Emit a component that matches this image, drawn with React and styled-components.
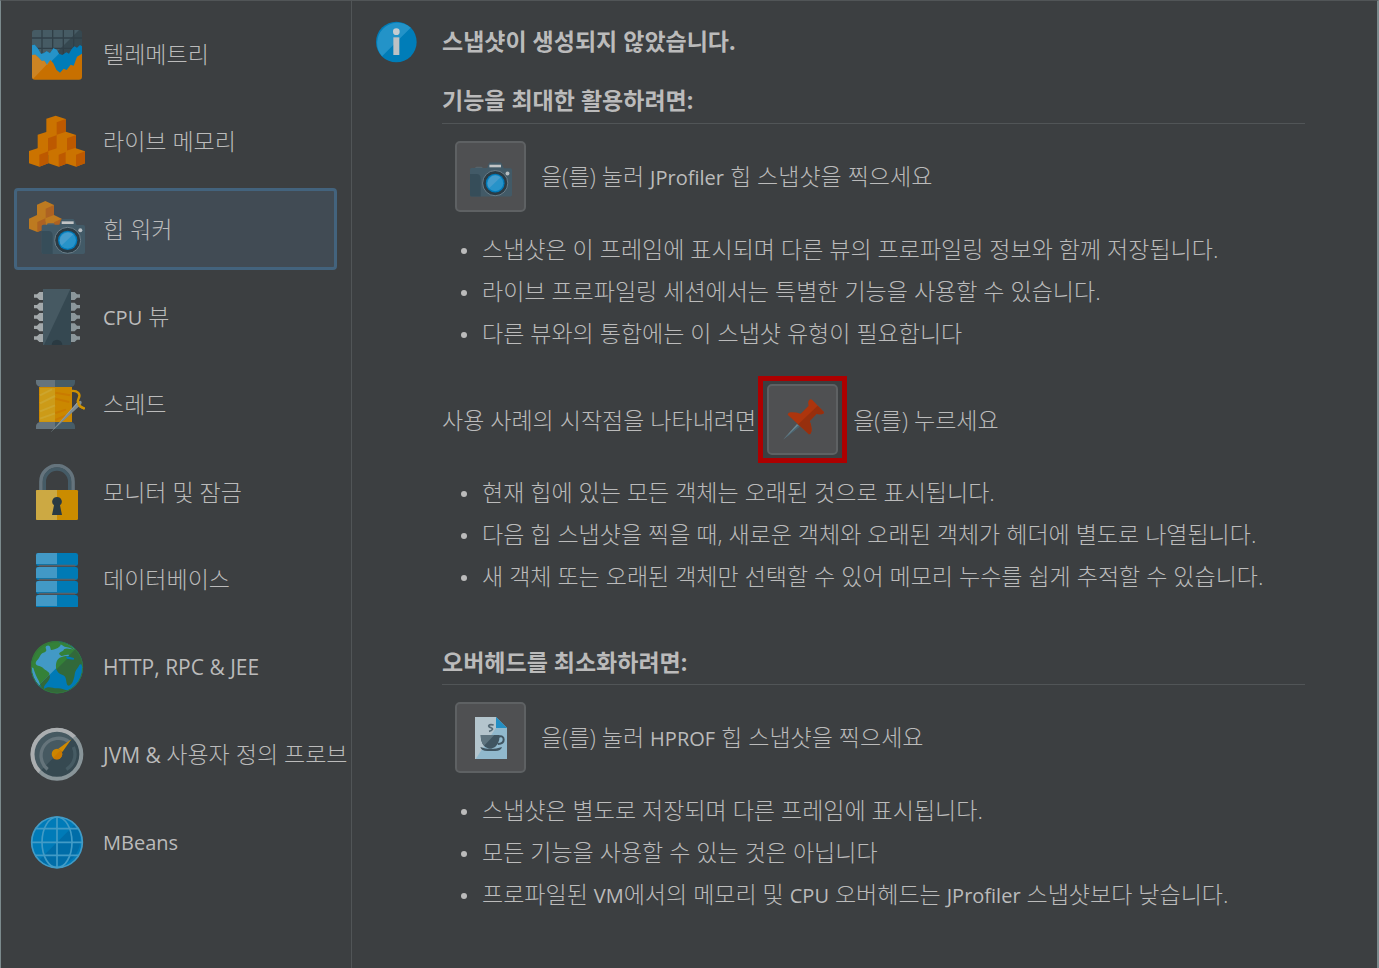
import styled, { createGlobalStyle, css } from 'styled-components';
import { useState } from 'react';

const TelemetryIcon = () => (
  <svg viewBox="87 78 168 168">
    <rect x="96" y="90" width="150" height="150" rx="9" fill="#364850" />
    <path d="M105 90h132L96 231V99q0-9 9-9z" fill="#465b64" />
    <path d="M126 90v75M158 90v75M190 90v75M221 90v75M96 114h150M96 145h150" stroke="#303f47" strokeWidth="4" />
    <path d="M96 136l8-2 10 12 9 16 8-2 9-6 10 6 10-15 10 4 7 12 10 4 12-8 8 4 8-14 8-8 8 4 9-8 6 4v90H96z" fill="#007cb8" />
    <path d="M96 136l8-2 10 12 9 16 8-2 9-6 10 6 10-15 10 4 7 12-62 62H96z" fill="#2693c8" />
    <path d="M96 165l10-1 10 9 9 10 8-1 8 13 10-15 9 10 9 19 11 9 11-12 9 4 12-16 9 3 10-27 15-9v69q0 9-9 9H105q-9 0-9-9z" fill="#c87000" />
    <path d="M96 165l10-1 10 9 9 10 8-1 8 13 10-13-52 55-3-6z" fill="#cd8423" />
  </svg>
);

const Cube = ({ x, y, depth = 46 }) => (
  <g transform={`translate(${x} ${y})`}>
    <path d={`M0 9L28 0l30 10v${depth - 10}L31 ${depth + 10} 0 ${depth}z`} fill="#cb7300" />
    <path d={`M31 20l27-10v${depth - 10}L31 ${depth + 10}z`} fill="#bd5900" />
  </g>
);

const LiveMemoryIcon = () => (
  <svg viewBox="87 339 168 168">
    <Cube x={139} y={347} depth={60} />
    <Cube x={113} y={395} depth={60} />
    <Cube x={170} y={395} depth={60} />
    <Cube x={87} y={444} />
    <Cube x={145} y={444} />
    <Cube x={197} y={444} />
  </svg>
);

// Camera body, drawn in a 130 x 106 area
const Camera = () => (
  <>
    <path d="M16 16q0-4 5-4h14q4 0 4 4v6H16z" fill="#55636b" />
    <path d="M0 21q0-5 5-5h48l5-14q1-3 5-3h30q4 0 5 3l7 15h20q5 0 5 5v77q0 5-5 5H5q-5 0-5-5z" fill="#425a67" />
    <path d="M0 35h20q13 0 13 14v55H5q-5 0-5-5z" fill="#364d59" />
    <rect x="60" y="6" width="36" height="8" fill="#c2c4c5" />
    <circle cx="78" cy="63" r="39" fill="#2b3b44" stroke="#6b7e89" strokeWidth="3" />
    <circle cx="78" cy="63" r="29" fill="#0079b8" />
    <circle cx="78" cy="63" r="25" fill="#2793c9" />
    <path d="M59 79a25 25 0 0 1 36-34z" fill="#459ccc" />
    <circle cx="116" cy="33" r="6" fill="#b6bdc1" />
  </>
);

const HeapWalkerIcon = () => (
  <svg viewBox="87 63 168 168">
    <path d="M111 74l25-11 26 12v37l-26 13-25-8z" fill="#bd7a20" />
    <path d="M137 86l25-11v37l-25 8z" fill="#ad6222" />
    <path d="M87 116l24-11 25 10v31l-24 10-25-10z" fill="#bd7a20" />
    <path d="M136 115l26-10 23 11v31l-23 10-26-11z" fill="#bd7a20" />
    <path d="M112 126l24-11v32l-24 9z" fill="#ad6222" />
    <path d="M162 127l23-11v31l-23 10z" fill="#ad6222" />
    <g transform="translate(125 118)"><Camera /></g>
  </svg>
);

const CpuIcon = () => (
  <svg viewBox="87 327 168 168">
    {[348, 380, 411, 442, 474].map((y) => (
      <g key={y}>
        <path d={`M129 ${y - 12}h-11l-7 7h-9v10h9l7 7h11z`} fill="#a3a9ab" />
        <path d={`M213 ${y - 12}h11l7 7h9v10h-9l-7 7h-11z`} fill="#8b979b" />
      </g>
    ))}
    <rect x="129" y="327" width="84" height="168" rx="3" fill="#354851" />
    <path d="M129 327h82l-79 168h-3z" fill="#465962" />
    <path d="M155 495a16 16 0 0 1 32 0z" fill="#2a3a42" />
  </svg>
);

const ThreadIcon = () => (
  <svg viewBox="87 48 168 168">
    <path d="M108 60h57v21h-44q-13-3-13-14zM108 207h57v-22h-44q-13 3-13 14z" fill="#65747d" />
    <path d="M165 60h60v7q0 12-13 14h-47zM165 207h60v-7q0-12-13-15h-47z" fill="#465c67" />
    <path d="M117 81h99v105h-99z" fill="#cb8800" />
    <path d="M120 84h45v101h-45z" fill="#cc9b18" />
    <path d="M120 106l36-18M120 130l45-22M120 154l45-18M120 176l45-16" stroke="#cda52d" strokeWidth="6" />
    <path d="M166 98l45 8M166 116l42 10M166 159l32-10M166 180l32-14" stroke="#c97b00" strokeWidth="6" />
    <path d="M213 93c20-3 30 10 23 22-6 12-5 24 17 30" fill="none" stroke="#cf9200" strokeWidth="7" />
    <path d="M152 217l79-89q7-8 12-5 5 5-2 13z" fill="#7d8c93" />
    <path d="M152 217l79-89 7-4z" fill="#a3adb1" />
    <path d="M235 126c-1 9 4 14 17 19" fill="none" stroke="#cf9200" strokeWidth="7" strokeLinecap="round" />
  </svg>
);

const LockIcon = () => (
  <svg viewBox="87 312 168 168">
    <path d="M123 392v-27a48 48 0 0 1 96 0v27" fill="none" stroke="#65747d" strokeWidth="11" />
    <path d="M133 392v-27a38 38 0 0 1 76 0v27" fill="none" stroke="#455b66" strokeWidth="10" />
    <rect x="108" y="390" width="126" height="90" rx="4" fill="#cb8c00" />
    <path d="M112 390h59v90h-59q-4 0-4-4v-82q0-4 4-4z" fill="#cca943" />
    <path d="M171 411a14 14 0 0 1 9 25l6 29h-30l6-29a14 14 0 0 1 9-25z" fill="#293a43" />
  </svg>
);

const DatabaseIcon = () => (
  <svg viewBox="87 33 168 168">
    {[39, 81, 123, 165].map((y) => (
      <g key={y}>
        <rect x="108" y={y} width="126" height="39" rx="7" fill="#007ab5" />
        <path d={`M115 ${y}h56v33h-63v-26q0-7 7-7z`} fill="#4299c6" />
      </g>
    ))}
    <path d="M116 77h110M116 119h110M116 161h110" stroke="#56616a" strokeWidth="5" />
  </svg>
);

const EarthIcon = () => (
  <svg viewBox="87 297 168 168">
    <circle cx="171" cy="382" r="78" fill="#007ab6" />
    <path d="M116 437a78 78 0 0 1 110-110z" fill="#4299c5" />
    <path d="M94 391c-6-48 25-88 77-88 12 4 14 12 7 17-6 6-14 7-23 10-5 1-2-12-9-13-8-1-11 4-8 10 3 7-2 9-8 11-10 3-9 13-18 22-8 9-5 15 2 17 12 1 16 9 24 14 7 5 12 8 10 13l-28 29c-6-13-15-27-22-38z" fill="#348138" />
    <path d="M94 382c1 23 10 42 26 54l-3-12c-7-12-12-24-17-40z" fill="#4299c5" />
    <path d="M148 404l-28 29c5 12 13 20 20 22-9-7-10-14-5-20 7-8 14-16 15-25z" fill="#32693a" />
    <path d="M180 306c22 4 42 17 52 34-9-10-20-18-34-19-6 0-9-5-18-8z" fill="#348138" />
    <path d="M177 342c4-9 12-5 15-14 9-7 22 2 34 0l-16 18c-11-5-22 4-27 1z" fill="#348138" />
    <path d="M226 327c16 15 23 40 21 55-4-8-5-14-10-5-6 11-11 12-13 27-3 18-8 30-18 33-9 0-5-20-12-28-7-7-19-3-26-24l43-42z" fill="#32693a" />
    <path d="M168 382c-1-14 3-26 15-30 11-4 19-5 25-2l-40 39z" fill="#348138" />
    <path d="M198 350c10-1 12 2 24 4l-1 5c-9 0-14-3-20-3z" fill="#007ab6" />
    <path d="M132 448c12-12 25-3 39-3 14-1 22 6 33 6-17 12-51 12-72-3z" fill="#32693a" />
    <path d="M246 370q2 24-8 45-8-13 0-29 6-4 8-16z" fill="#007ab6" />
    <circle cx="171" cy="382" r="77" fill="none" stroke="#347539" strokeWidth="3" />
  </svg>
);

const GaugeIcon = () => (
  <svg viewBox="87 53 168 168">
    <circle cx="171" cy="135" r="73" fill="#364951" stroke="#899599" strokeWidth="12" />
    <path d="M223 83L119 187a73 73 0 0 1 104-104z" fill="#465961" />
    <path d="M119 187a73 73 0 0 1 104-104" fill="none" stroke="#abaeb0" strokeWidth="12" />
    <path d="M143 180a52 52 0 0 1 65-82" fill="none" stroke="#65747b" strokeWidth="10" />
    <path d="M220 113a52 52 0 0 1-21 67" fill="none" stroke="#465b63" strokeWidth="10" />
    <path d="M175 118l39-28-27 38z" fill="#d08a00" />
    <circle cx="171" cy="134" r="16" fill="#cd8500" />
    <path d="M182 123a16 16 0 0 1-23 23l55-56z" fill="#ca7900" />
  </svg>
);

const GlobeIcon = () => (
  <svg viewBox="87 313 168 168">
    <circle cx="171" cy="398" r="77" fill="#007bb8" />
    <path d="M225 344a77 77 0 0 1-108 108z" fill="#006da8" />
    <g fill="none" stroke="#429bc6" strokeWidth="5">
      <circle cx="171" cy="398" r="76" />
      <ellipse cx="171" cy="398" rx="45" ry="76" />
      <path d="M171 321v154M94 398h154M106 357h130M106 437h130" />
    </g>
  </svg>
);

const InfoIcon = () => (
  <svg viewBox="2 -2 126 126">
    <circle cx="63" cy="61" r="61" fill="#007db8" />
    <path d="M20 104A61 61 0 0 1 106 18z" fill="#2393c8" />
    <circle cx="63" cy="30" r="10" fill="#c6ccd0" />
    <path d="M54 47h18v53H54z" fill="#bcc1c4" />
  </svg>
);

const PinIcon = () => (
  <svg viewBox="0 0 126 126">
    <path d="M3 122l42-47 7 7z" fill="#6b8792" />
    <path d="M3 122l46-43 4 4z" fill="#4b6470" />
    <path d="M82 2q5-3 9 1l34 35q2 5-4 7-9 2-17-1L83 66q8 19 5 32-2 8-7 8L17 47q1-6 8-7 15-1 31 4l24-24q-4-11 2-18z" fill="#ad350d" />
    <path d="M107 20l18 18q2 5-4 7-9 2-17-1L83 66q8 19 5 32-2 8-7 8L49 76z" fill="#972f0d" />
  </svg>
);

const HprofIcon = () => (
  <svg viewBox="0 0 126 126">
    <path d="M15 0h63l33 33v93H15z" fill="#91b9cd" />
    <path d="M15 0h63v32L17 126h-2z" fill="#b4c5cd" />
    <path d="M78 0l33 33H78z" fill="#238fc4" />
    <path d="M71 24c-16-4-20 5-8 8 9 3 3 9-6 11" fill="none" stroke="#566b76" strokeWidth="5" />
    <path d="M32 54h57q0 36-25 41h-7Q32 90 32 54z" fill="#405561" />
    <path d="M32 54h41L42 86q-10-12-10-32z" fill="#5e747f" />
    <path d="M86 59q15-4 15 9 0 12-17 13" fill="none" stroke="#405561" strokeWidth="6" />
    <path d="M31 90q30 12 65 0-3 12-20 12H52q-18 0-21-12z" fill="#405561" />
  </svg>
);

const CameraIcon = () => (
  <svg viewBox="0 0 130 126"><g transform="translate(0 19)"><Camera /></g></svg>
);

const views = [
  { id: 'telemetry', label: '텔레메트리', Icon: TelemetryIcon },
  { id: 'memory', label: '라이브 메모리', Icon: LiveMemoryIcon },
  { id: 'heap', label: '힙 워커', Icon: HeapWalkerIcon },
  { id: 'cpu', label: <><Latin>CPU</Latin> 뷰</>, Icon: CpuIcon },
  { id: 'threads', label: '스레드', Icon: ThreadIcon },
  { id: 'monitors', label: '모니터 및 잠금', Icon: LockIcon },
  { id: 'databases', label: '데이터베이스', Icon: DatabaseIcon },
  { id: 'http', label: <Latin large>HTTP, RPC &amp; JEE</Latin>, Icon: EarthIcon },
  { id: 'probes', label: <><Latin large>JVM &amp; </Latin>사용자 정의 프로브</>, Icon: GaugeIcon },
  { id: 'mbeans', label: <Latin>MBeans</Latin>, Icon: GlobeIcon },
];

// Latin words run a little wide next to Hangul, so they get a smaller size
function Latin({ large, children }) {
  return <LatinText $large={large}>{children}</LatinText>;
}

const App = () => {
  const [selected, setSelected] = useState('heap');

  return (
    <>
      <GlobalStyle />
      <Window>
        <Sidebar>
          <ViewList>
            {views.map(({ id, label, Icon }) => (
              <ViewItem key={id}>
                <ViewButton
                  type="button"
                  $selected={id === selected}
                  aria-pressed={id === selected}
                  onClick={() => setSelected(id)}
                >
                  <ViewIcon><Icon /></ViewIcon>
                  <span>{label}</span>
                </ViewButton>
              </ViewItem>
            ))}
          </ViewList>
        </Sidebar>

        <Main>
          <SmallIcon><InfoIcon /></SmallIcon>
          <Content>
            <Title>스냅샷이 생성되지 않았습니다.</Title>

            <Heading>기능을 최대한 활용하려면:</Heading>
            <Action>
              <ToolButton type="button" aria-label="힙 스냅샷 찍기">
                <SmallIcon><CameraIcon /></SmallIcon>
              </ToolButton>
              <span>을(를) 눌러 <Latin>JProfiler</Latin> 힙 스냅샷을 찍으세요</span>
            </Action>
            <Notes>
              <Note>스냅샷은 이 프레임에 표시되며 다른 뷰의 프로파일링 정보와 함께 저장됩니다.</Note>
              <Note>라이브 프로파일링 세션에서는 특별한 기능을 사용할 수 있습니다.</Note>
              <Note>다른 뷰와의 통합에는 이 스냅샷 유형이 필요합니다</Note>
            </Notes>

            <MarkAction>
              <span>사용 사례의 시작점을 나타내려면</span>
              <Highlight>
                <ToolButton type="button" aria-label="힙 표시">
                  <SmallIcon><PinIcon /></SmallIcon>
                </ToolButton>
              </Highlight>
              <span>을(를) 누르세요</span>
            </MarkAction>
            <Notes $tight>
              <Note>현재 힙에 있는 모든 객체는 오래된 것으로 표시됩니다.</Note>
              <Note>다음 힙 스냅샷을 찍을 때, 새로운 객체와 오래된 객체가 헤더에 별도로 나열됩니다.</Note>
              <Note>새 객체 또는 오래된 객체만 선택할 수 있어 메모리 누수를 쉽게 추적할 수 있습니다.</Note>
            </Notes>

            <Heading $spaced>오버헤드를 최소화하려면:</Heading>
            <Action>
              <ToolButton type="button" aria-label="HPROF 스냅샷 찍기">
                <SmallIcon><HprofIcon /></SmallIcon>
              </ToolButton>
              <span>을(를) 눌러 <Latin>HPROF</Latin> 힙 스냅샷을 찍으세요</span>
            </Action>
            <Notes>
              <Note>스냅샷은 별도로 저장되며 다른 프레임에 표시됩니다.</Note>
              <Note>모든 기능을 사용할 수 있는 것은 아닙니다</Note>
              <Note>
                프로파일된 <Latin>VM</Latin>에서의 메모리 및 <Latin>CPU</Latin> 오버헤드는{' '}
                <Latin>JProfiler</Latin> 스냅샷보다 낮습니다.
              </Note>
            </Notes>
          </Content>
        </Main>
      </Window>
    </>
  );
};

export default App;

const GlobalStyle = createGlobalStyle`
  * {
    box-sizing: border-box;
  }
  body {
    margin: 0;
    background: #3c3f41;
    color: #bbbbbb;
    font-family: "Open Sans", "Noto Sans CJK KR", sans-serif;
    font-size: 23px;
    font-weight: 300;
    line-height: 42px;
  }
  svg {
    display: block;
    width: 100%;
    height: 100%;
  }
`;

const LatinText = styled.span`
  font-size: ${({ $large }) => ($large ? '21px' : '20px')};
  font-weight: 400;
`;

const Window = styled.div`
  display: flex;
  min-height: 100vh;
  border-top: 1px solid #515557;
  border-left: 1px solid #7b8a8d;
  border-right: 2px solid #7b8a8d;
`;

const Sidebar = styled.nav`
  flex: 0 0 351px;
  padding: 9px 13px;
  overflow: hidden;
  border-right: 1px solid #515557;
`;

const ViewList = styled.ul`
  display: flex;
  flex-direction: column;
  min-height: 876px;
  margin: 0;
  padding: 0;
  list-style: none;
`;

const ViewItem = styled.li`
  display: flex;
  flex: 1;
  align-items: center;
`;

const ViewButton = styled.button`
  display: flex;
  align-items: center;
  gap: 18px;
  width: 323px;
  height: 82px;
  padding: 0 12px;
  border: 3px solid transparent;
  border-radius: 4px;
  background: transparent;
  color: inherit;
  font: inherit;
  white-space: nowrap;
  cursor: pointer;
  ${({ $selected }) =>
    $selected &&
    css`
      background: #414b54;
      border-color: #43637d;
    `}
`;

const ViewIcon = styled.span`
  flex: none;
  width: 56px;
  height: 56px;
`;

const SmallIcon = styled.span`
  flex: none;
  width: 42px;
  height: 42px;
`;

const Main = styled.main`
  display: flex;
  flex: 1;
  gap: 24px;
  min-width: 0;
  padding: 20px 72px 20px 24px;
`;

const Content = styled.div`
  flex: 1;
  min-width: 0;
`;

const Title = styled.h1`
  margin: 0;
  font-size: 23px;
  font-weight: 700;
  line-height: 40px;
`;

const Heading = styled.h2`
  margin: ${({ $spaced }) => ($spaced ? '45px' : '19px')} 0 0;
  padding-bottom: ${({ $spaced }) => ($spaced ? '2px' : '3px')};
  border-bottom: 1px solid #515557;
  font-size: 23px;
  font-weight: 700;
  line-height: 40px;
`;

const Action = styled.div`
  display: flex;
  align-items: center;
  gap: 15px;
  margin-top: 17px;
  padding-left: 13px;
`;

const MarkAction = styled.div`
  display: flex;
  align-items: center;
  margin-top: 22px;
`;

const Highlight = styled.div`
  margin: 0 6px 0 2px;
  padding: 3px 4px;
  border: 5px solid #ad0000;
`;

const ToolButton = styled.button`
  display: flex;
  align-items: center;
  justify-content: center;
  width: 71px;
  height: 71px;
  padding: 0;
  border: 2px solid #5e6163;
  border-radius: 5px;
  background: #4f5052;
  cursor: pointer;
`;

const Notes = styled.ul`
  margin: ${({ $tight }) => ($tight ? '8px' : '16px')} 0 0;
  padding: 0 0 0 19px;
  list-style: none;
`;

const Note = styled.li`
  position: relative;
  padding-left: 21px;

  &::before {
    content: '';
    position: absolute;
    top: 20px;
    left: 0;
    width: 6px;
    height: 6px;
    border-radius: 50%;
    background: #bbbbbb;
  }
`;
